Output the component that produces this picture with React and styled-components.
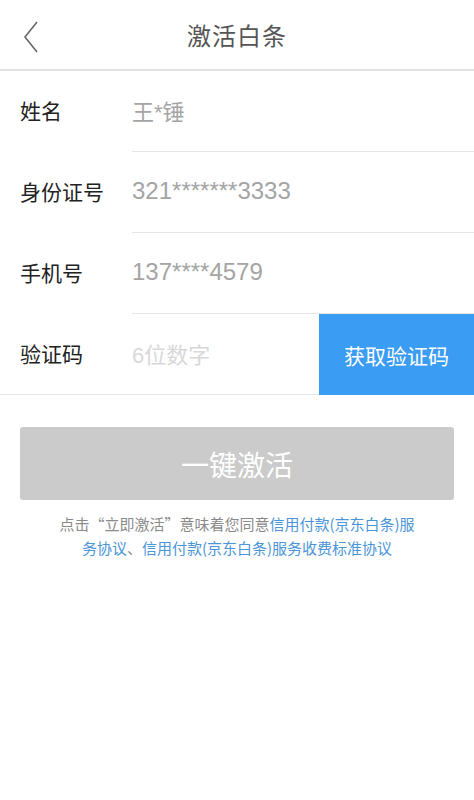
import React from 'react'
import styled, { createGlobalStyle } from 'styled-components'

const GlobalStyle = createGlobalStyle`
    html, body {
        margin: 0;
        padding: 0;
        background: #ffffff;
        font-family: "Noto Sans CJK SC", "Liberation Sans", sans-serif;
    }
`

const fields = [
    { label: '姓名', value: '王*锤' },
    { label: '身份证号', value: '321*******3333', digits: true },
    { label: '手机号', value: '137****4579', digits: true },
]

const App = () => {
    return (
        <Root>
            <GlobalStyle />
            <Header>
                <Back>
                    <svg width="16" height="32" viewBox="0 0 16 32">
                        <polyline points="14,1 2,16 14,31" fill="none" stroke="#666" strokeWidth="1.6" />
                    </svg>
                </Back>
                <Title>激活白条</Title>
            </Header>
            <Form>
                {fields.map(f => (
                    <Row key={f.label}>
                        <Label>{f.label}</Label>
                        <Value digits={f.digits}>{f.value}</Value>
                    </Row>
                ))}
                <Row last>
                    <Label>验证码</Label>
                    <Value placeholder>6位数字</Value>
                    <CodeButton>获取验证码</CodeButton>
                </Row>
            </Form>
            <Body>
                <Submit>一键激活</Submit>
                <Agreement>
                    点击“立即激活”意味着您同意<Link>信用付款(京东白条)服务协议</Link>、<Link>信用付款(京东白条)服务收费标准协议</Link>
                </Agreement>
            </Body>
        </Root>
    )
}

export default App


const Root = styled.div`
    width: 474px;
    min-height: 800px;
    background: #fff;
`
const Header = styled.div`
    position: relative;
    height: 69px;
    display: flex;
    align-items: center;
    justify-content: center;
    border-bottom: 2px solid #e2e2e2;
`
const Back = styled.div`
    position: absolute;
    left: 23px; top: 21px;
    display: flex;
`
const Title = styled.div`
    font-size: 24px;
    color: #555;
    letter-spacing: 1px;
`
const Form = styled.div`
    display: flex;
    flex-direction: column;
`
const Row = styled.div`
    height: 81px;
    display: flex;
    align-items: center;
    position: relative;
    padding-left: 20px;
    &::after {
        content: '';
        position: absolute;
        bottom: 0; right: 0;
        left: ${({ last }) => last ? '0' : '132px'};
        height: 1.5px;
        background: #e6e6e6;
    }
`
const Label = styled.div`
    width: 112px;
    font-size: 21px;
    color: #222;
    margin-top: -3px;
`
const Value = styled.div`
    flex: 1;
    font-family: "Liberation Sans", "Noto Sans CJK SC", sans-serif;
    font-size: ${({ digits }) => digits ? '24px' : '22px'};
    color: ${({ placeholder }) => placeholder ? '#d8d8d8' : '#a4a4a4'};
    margin-top: -3px;
`
const CodeButton = styled.div`
    width: 155px;
    height: 81px;
    display: flex;
    align-items: center;
    justify-content: center;
    background: #3b9cf4;
    color: #fff;
    font-size: 21px;
    position: relative;
    z-index: 1;
`
const Body = styled.div`
    padding: 32px 20px 0;
    display: flex;
    flex-direction: column;
    align-items: center;
`
const Submit = styled.div`
    width: 100%;
    height: 73px;
    display: flex;
    align-items: center;
    justify-content: center;
    background: #cbcbcb;
    border-radius: 3px;
    color: #fff;
    font-size: 28px;
`
const Agreement = styled.div`
    margin-top: 12px;
    width: 360px;
    text-align: center;
    font-size: 15px;
    line-height: 24px;
    color: #8a8a8a;
`
const Link = styled.span`
    color: #4b95d8;
`
